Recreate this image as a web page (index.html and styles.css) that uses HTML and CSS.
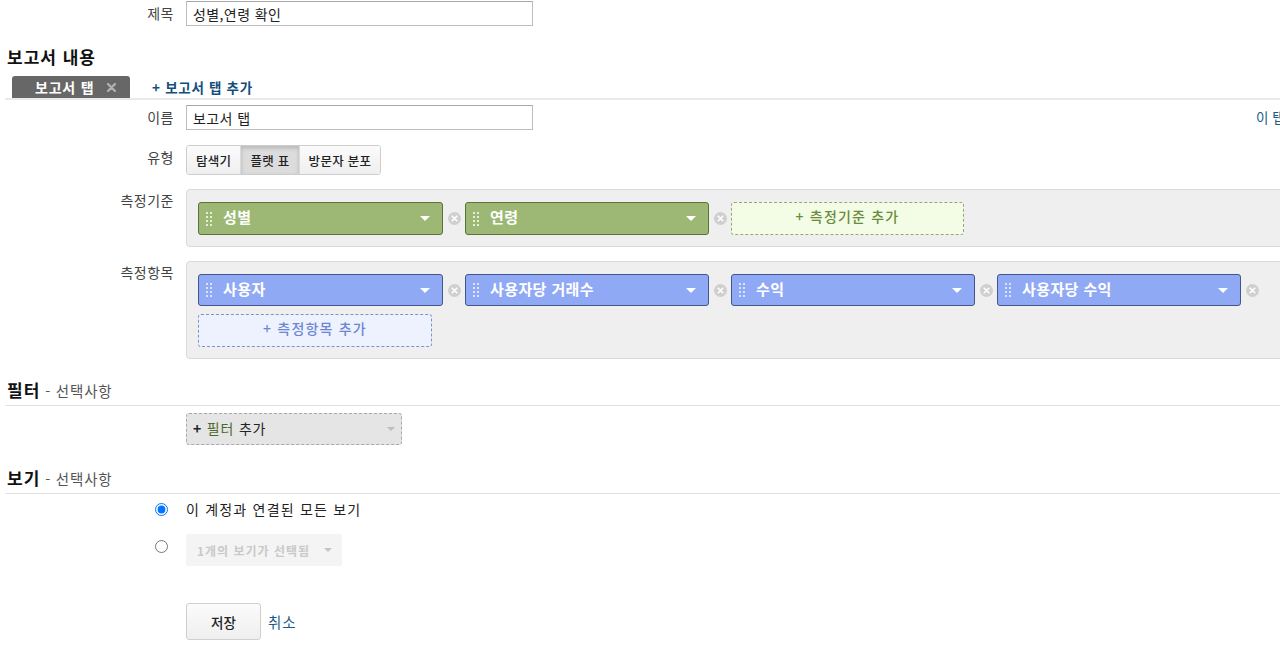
FILE: index.html
```html
<!DOCTYPE html>
<html lang="ko">
<head>
<meta charset="utf-8">
<title>맞춤 보고서 수정</title>
<link rel="stylesheet" href="styles.css">
</head>
<body>
<div class="page">
  <div class="row row-title">
    <div class="label">제목</div>
    <input class="text-input" type="text" value="성별,연령 확인">
  </div>

  <h2 class="section-title">보고서 내용</h2>

  <div class="tabbar">
    <div class="tab"><span class="tab-name">보고서 탭</span><svg class="tab-close" width="9" height="9" viewBox="0 0 9 9"><path d="M1 1 L8 8 M8 1 L1 8" stroke="#b3b3b3" stroke-width="2.2" stroke-linecap="round"/></svg></div>
    <a class="tab-add">+ 보고서 탭 추가</a>
  </div>

  <div class="row row-name">
    <div class="label">이름</div>
    <input class="text-input" type="text" value="보고서 탭">
    <a class="tab-remove">이 탭 삭제</a>
  </div>

  <div class="row row-type">
    <div class="label">유형</div>
    <div class="btn-group">
      <button class="seg">탐색기</button>
      <button class="seg active">플랫 표</button>
      <button class="seg">방문자 분포</button>
    </div>
  </div>

  <div class="row row-dims">
    <div class="label label-box">측정기준</div>
    <div class="pill-box">
      <div class="pill-item">
        <div class="pill pill-dim">
          <svg class="grip" width="6" height="14" viewBox="0 0 6 14"><g fill="#e6eedb"><rect x="0" y="0" width="2" height="2"/><rect x="4" y="0" width="2" height="2"/><rect x="0" y="4" width="2" height="2"/><rect x="4" y="4" width="2" height="2"/><rect x="0" y="8" width="2" height="2"/><rect x="4" y="8" width="2" height="2"/><rect x="0" y="12" width="2" height="2"/><rect x="4" y="12" width="2" height="2"/></g></svg>
          <span class="pill-text">성별</span>
          <span class="caret"></span>
        </div>
        <span class="remove"><svg width="13" height="13" viewBox="0 0 13 13"><circle cx="6.5" cy="6.5" r="6.5" fill="#cfcfcf"/><path d="M4.2 4.2 L8.8 8.8 M8.8 4.2 L4.2 8.8" stroke="#fff" stroke-width="1.6" stroke-linecap="round"/></svg></span>
      </div>
      <div class="pill-item">
        <div class="pill pill-dim">
          <svg class="grip" width="6" height="14" viewBox="0 0 6 14"><g fill="#e6eedb"><rect x="0" y="0" width="2" height="2"/><rect x="4" y="0" width="2" height="2"/><rect x="0" y="4" width="2" height="2"/><rect x="4" y="4" width="2" height="2"/><rect x="0" y="8" width="2" height="2"/><rect x="4" y="8" width="2" height="2"/><rect x="0" y="12" width="2" height="2"/><rect x="4" y="12" width="2" height="2"/></g></svg>
          <span class="pill-text">연령</span>
          <span class="caret"></span>
        </div>
        <span class="remove"><svg width="13" height="13" viewBox="0 0 13 13"><circle cx="6.5" cy="6.5" r="6.5" fill="#cfcfcf"/><path d="M4.2 4.2 L8.8 8.8 M8.8 4.2 L4.2 8.8" stroke="#fff" stroke-width="1.6" stroke-linecap="round"/></svg></span>
      </div>
      <div class="add-box add-dim">+ 측정기준 추가</div>
    </div>
  </div>

  <div class="row row-metrics">
    <div class="label label-box">측정항목</div>
    <div class="pill-box">
      <div class="pill-item">
        <div class="pill pill-met">
          <svg class="grip" width="6" height="14" viewBox="0 0 6 14"><g fill="#dce4fc"><rect x="0" y="0" width="2" height="2"/><rect x="4" y="0" width="2" height="2"/><rect x="0" y="4" width="2" height="2"/><rect x="4" y="4" width="2" height="2"/><rect x="0" y="8" width="2" height="2"/><rect x="4" y="8" width="2" height="2"/><rect x="0" y="12" width="2" height="2"/><rect x="4" y="12" width="2" height="2"/></g></svg>
          <span class="pill-text">사용자</span>
          <span class="caret"></span>
        </div>
        <span class="remove"><svg width="13" height="13" viewBox="0 0 13 13"><circle cx="6.5" cy="6.5" r="6.5" fill="#cfcfcf"/><path d="M4.2 4.2 L8.8 8.8 M8.8 4.2 L4.2 8.8" stroke="#fff" stroke-width="1.6" stroke-linecap="round"/></svg></span>
      </div>
      <div class="pill-item">
        <div class="pill pill-met">
          <svg class="grip" width="6" height="14" viewBox="0 0 6 14"><g fill="#dce4fc"><rect x="0" y="0" width="2" height="2"/><rect x="4" y="0" width="2" height="2"/><rect x="0" y="4" width="2" height="2"/><rect x="4" y="4" width="2" height="2"/><rect x="0" y="8" width="2" height="2"/><rect x="4" y="8" width="2" height="2"/><rect x="0" y="12" width="2" height="2"/><rect x="4" y="12" width="2" height="2"/></g></svg>
          <span class="pill-text">사용자당 거래수</span>
          <span class="caret"></span>
        </div>
        <span class="remove"><svg width="13" height="13" viewBox="0 0 13 13"><circle cx="6.5" cy="6.5" r="6.5" fill="#cfcfcf"/><path d="M4.2 4.2 L8.8 8.8 M8.8 4.2 L4.2 8.8" stroke="#fff" stroke-width="1.6" stroke-linecap="round"/></svg></span>
      </div>
      <div class="pill-item">
        <div class="pill pill-met">
          <svg class="grip" width="6" height="14" viewBox="0 0 6 14"><g fill="#dce4fc"><rect x="0" y="0" width="2" height="2"/><rect x="4" y="0" width="2" height="2"/><rect x="0" y="4" width="2" height="2"/><rect x="4" y="4" width="2" height="2"/><rect x="0" y="8" width="2" height="2"/><rect x="4" y="8" width="2" height="2"/><rect x="0" y="12" width="2" height="2"/><rect x="4" y="12" width="2" height="2"/></g></svg>
          <span class="pill-text">수익</span>
          <span class="caret"></span>
        </div>
        <span class="remove"><svg width="13" height="13" viewBox="0 0 13 13"><circle cx="6.5" cy="6.5" r="6.5" fill="#cfcfcf"/><path d="M4.2 4.2 L8.8 8.8 M8.8 4.2 L4.2 8.8" stroke="#fff" stroke-width="1.6" stroke-linecap="round"/></svg></span>
      </div>
      <div class="pill-item">
        <div class="pill pill-met">
          <svg class="grip" width="6" height="14" viewBox="0 0 6 14"><g fill="#dce4fc"><rect x="0" y="0" width="2" height="2"/><rect x="4" y="0" width="2" height="2"/><rect x="0" y="4" width="2" height="2"/><rect x="4" y="4" width="2" height="2"/><rect x="0" y="8" width="2" height="2"/><rect x="4" y="8" width="2" height="2"/><rect x="0" y="12" width="2" height="2"/><rect x="4" y="12" width="2" height="2"/></g></svg>
          <span class="pill-text">사용자당 수익</span>
          <span class="caret"></span>
        </div>
        <span class="remove"><svg width="13" height="13" viewBox="0 0 13 13"><circle cx="6.5" cy="6.5" r="6.5" fill="#cfcfcf"/><path d="M4.2 4.2 L8.8 8.8 M8.8 4.2 L4.2 8.8" stroke="#fff" stroke-width="1.6" stroke-linecap="round"/></svg></span>
      </div>
      <div class="add-box add-met">+ 측정항목 추가</div>
    </div>
  </div>

  <h2 class="section-title sub-section sec-filter">필터<span class="optional"> - 선택사항</span></h2>

  <div class="row row-filter">
    <div class="label"></div>
    <div class="filter-add"><span class="filter-label"><b class="plus">+</b> <span class="filter-word">필터</span> 추가</span><span class="caret caret-gray"></span></div>
  </div>

  <h2 class="section-title sub-section sec-view">보기<span class="optional"> - 선택사항</span></h2>

  <div class="row row-radio1">
    <div class="label label-radio"><input type="radio" name="view" checked></div>
    <span class="radio-text">이 계정과 연결된 모든 보기</span>
  </div>

  <div class="row row-radio2">
    <div class="label label-radio"><input type="radio" name="view"></div>
    <div class="view-select">1개의 보기가 선택됨<span class="caret caret-light"></span></div>
  </div>

  <div class="row row-actions">
    <div class="label"></div>
    <button class="save-btn">저장</button>
    <a class="cancel">취소</a>
  </div>
</div>
</body>
</html>
```

FILE: styles.css
```css
html, body {
  margin: 0;
  padding: 0;
  background: #fff;
  overflow: hidden;
}

body {
  font-family: "Noto Sans CJK KR", "Liberation Sans", Arial, sans-serif;
  font-size: 13px;
  color: #222;
}

.page {
  width: 1330px;
}

.row {
  display: flex;
  align-items: flex-start;
}

.label {
  flex: 0 0 174px;
  width: 174px;
  margin-right: 12px;
  text-align: right;
  font-size: 14px;
  letter-spacing: 0.5px;
  line-height: 25px;
  color: #444;
}

.label-box {
  line-height: 22px;
}

.text-input {
  box-sizing: border-box;
  width: 347px;
  height: 25px;
  margin: 0;
  padding: 0 6px;
  border: 1px solid #bdbdbd;
  border-top-color: #a8a8a8;
  font-family: inherit;
  font-size: 14px;
  letter-spacing: 0.4px;
  color: #222;
  outline: none;
}

.row-title {
  margin-top: 1px;
}

.section-title {
  margin: 19px 0 0 7px;
  font-size: 17px;
  letter-spacing: 1px;
  font-weight: bold;
  line-height: 24px;
  color: #111;
}

/* tabs */
.tabbar {
  display: flex;
  align-items: flex-end;
  margin: 7px 0 0 5px;
  height: 22px;
  border-bottom: 2px solid #eaeaea;
}

.tab {
  box-sizing: border-box;
  width: 118px;
  height: 22px;
  margin-left: 7px;
  background: #676767;
  border-radius: 3px 3px 0 0;
  display: flex;
  align-items: center;
  padding-left: 23px;
  color: #fff;
  font-weight: bold;
  font-size: 14px;
  letter-spacing: 0.8px;
}

.tab-close {
  margin-left: 13px;
  display: block;
}

.tab-add {
  margin-left: 22px;
  align-self: center;
  color: #134f7c;
  font-weight: bold;
  font-size: 13.5px;
  letter-spacing: 0.7px;
  line-height: 22px;
}

.row-name {
  margin-top: 5px;
}

.tab-remove {
  margin-left: 723px;
  color: #1a5a8a;
  font-size: 13.5px;
  line-height: 25px;
  white-space: nowrap;
}

/* type buttons */
.row-type {
  margin-top: 15px;
}

.row-type .label {
  line-height: 24px;
}

.btn-group {
  display: flex;
  border: 1px solid #cdcdcd;
  border-radius: 3px;
  overflow: hidden;
  height: 28px;
}

.seg {
  margin: 0;
  border: 0;
  padding: 0 9px;
  height: 28px;
  background: linear-gradient(#fbfbfb, #efefef);
  font-family: inherit;
  font-size: 12.5px;
  letter-spacing: 0.3px;
  color: #222;
  font-weight: 500;
}

.seg + .seg {
  border-left: 1px solid #dadada;
}

.seg.active {
  background: #dcdcdc;
  box-shadow: inset 0 2px 4px rgba(0,0,0,0.18);
}

/* pill boxes */
.row-dims {
  margin-top: 14px;
}

.row-metrics {
  margin-top: 14px;
}

.pill-box {
  flex: 1;
  display: flex;
  flex-wrap: wrap;
  row-gap: 8px;
  box-sizing: border-box;
  padding: 12px 12px 11px 11px;
  background: #efefef;
  border: 1px solid #d9d9d9;
  border-radius: 4px;
  min-width: 0;
}

.pill-item {
  display: flex;
  align-items: center;
}

.pill {
  box-sizing: border-box;
  width: 245px;
  height: 33px;
  border-radius: 3px;
  display: flex;
  align-items: center;
  padding-left: 7px;
  padding-right: 12px;
  color: #fff;
}

.pill-dim {
  background: #9cb874;
  border: 1px solid #5a7337;
}

.pill-met {
  background: #8fa9f5;
  border: 1px solid #44558c;
  height: 32px;
}

.pill-item + .pill-item .pill {
  width: 244px;
}

.grip {
  flex: 0 0 auto;
}

.pill-text {
  margin-left: 11px;
  margin-bottom: 4px;
  font-size: 15px;
  letter-spacing: 0.4px;
  font-weight: bold;
  flex: 1;
  white-space: nowrap;
}

.caret {
  width: 0;
  height: 0;
  border-left: 5px solid transparent;
  border-right: 5px solid transparent;
  border-top: 5px solid #fff;
}

.remove {
  width: 22px;
  display: flex;
  justify-content: center;
  align-items: center;
}

.remove svg {
  display: block;
}

.add-box {
  box-sizing: border-box;
  height: 33px;
  padding-bottom: 5px;
  border-radius: 3px;
  display: flex;
  align-items: center;
  justify-content: center;
  font-size: 14px;
  letter-spacing: 1.2px;
  font-weight: 500;
}

.add-dim {
  width: 233px;
  background: #f3fde6;
  border: 1px dashed #97a57a;
  color: #6a8a3c;
}

.add-met {
  width: 234px;
  background: #eef2fe;
  border: 1px dashed #7e92c7;
  color: #6c87d2;
}

/* sub sections */
.sub-section {
  margin-top: 19px;
  margin-left: 5px;
  padding-left: 2px;
  padding-bottom: 2px;
  border-bottom: 1px solid #e2e2e2;
}

.sec-view {
  margin-top: 21px;
}

.optional {
  font-size: 14.5px;
  letter-spacing: 0.8px;
  font-weight: normal;
  color: #555;
}

.row-filter {
  margin-top: 7px;
}

.filter-add {
  box-sizing: border-box;
  width: 216px;
  height: 32px;
  background: #e5e5e5;
  border: 1px dashed #a9a9a9;
  border-radius: 3px;
  display: flex;
  align-items: center;
  padding-left: 6px;
  padding-right: 6px;
  font-size: 14px;
  letter-spacing: 0.8px;
  color: #222;
}

.filter-label {
  padding-bottom: 3px;
}

.plus {
  font-weight: bold;
}

.filter-word {
  color: #4d6b2e;
}

.caret-gray {
  margin-left: auto;
  border-top-color: #bdbdbd;
  border-left-width: 4px;
  border-right-width: 4px;
  border-top-width: 4px;
}

/* radios */
.row-radio1 {
  margin-top: 3px;
  align-items: center;
}

.label-radio {
  display: flex;
  justify-content: flex-end;
  align-items: center;
  height: 24px;
}

.label-radio input {
  margin: 0 6px 0 0;
  width: 13px;
  height: 13px;
}

.radio-text {
  font-size: 14px;
  letter-spacing: 1.2px;
  color: #222;
  line-height: 24px;
}

.row-radio2 {
  margin-top: 13px;
}

.row-radio2 .label-radio {
  height: 24px;
}

.view-select {
  box-sizing: border-box;
  width: 156px;
  height: 32px;
  background: #f4f4f4;
  border-radius: 2px;
  display: flex;
  align-items: center;
  padding-left: 11px;
  padding-right: 10px;
  color: #c9c9c9;
  font-size: 12px;
  letter-spacing: 1px;
  font-weight: bold;
  white-space: nowrap;
}

.caret-light {
  margin-left: auto;
  border-top-color: #c4c4c4;
  border-left-width: 4px;
  border-right-width: 4px;
  border-top-width: 4px;
}

/* actions */
.row-actions {
  margin-top: 37px;
  align-items: center;
}

.save-btn {
  box-sizing: border-box;
  width: 75px;
  height: 37px;
  margin: 0;
  border: 1px solid #cfcfcf;
  border-radius: 3px;
  background: linear-gradient(#fbfbfb, #efefef);
  font-family: inherit;
  font-size: 13.5px;
  font-weight: 500;
  color: #222;
}

.cancel {
  margin-left: 7px;
  color: #1a5a8a;
  font-size: 14.5px;
  letter-spacing: 0.8px;
}
```
